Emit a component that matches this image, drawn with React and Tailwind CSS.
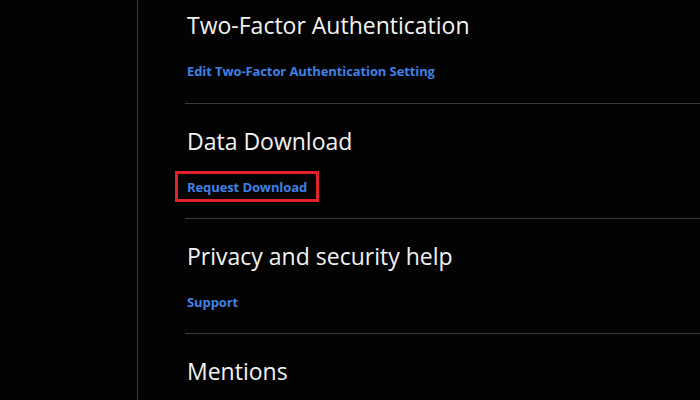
const sections = [
  { title: 'Two-Factor Authentication', link: 'Edit Two-Factor Authentication Setting', first: true },
  { title: 'Data Download', link: 'Request Download', marked: true },
  { title: 'Privacy and security help', link: 'Support' },
  { title: 'Mentions' },
];

const font = { fontFamily: '"Open Sans", "Noto Sans", sans-serif' };

const Section = ({ title, link, first, marked }) => (
  <div className={`border-b border-[#3a3a3a] ${first ? 'pt-[10px] pb-[25px]' : 'pt-[22px] pb-[24px]'}`}>
    <h2 className="text-[23px] leading-[30px] text-[#f2f2f2] pl-[2px]">{title}</h2>
    {link && (
      <div className="mt-[18px] h-[20px] pl-[2px]">
        <a className="relative inline-block text-[13px] leading-[20px] font-bold text-[#3f80e4] tracking-[-0.1px]">
          {link}
          {marked && (
            <span className="pointer-events-none absolute -left-[12px] -right-[12px] -top-[6px] -bottom-[5px] border-[3px] border-[#e2232c]" />
          )}
        </a>
      </div>
    )}
  </div>
);

export default function App() {
  return (
    <div className="flex h-[400px] w-[700px] overflow-hidden bg-[#030303]" style={font}>
      <aside className="w-[138px] shrink-0 border-r border-[#3a3a3a]" />
      <main className="flex-1 pl-[47px]">
        {sections.map((s) => (
          <Section key={s.title} {...s} />
        ))}
      </main>
    </div>
  );
}
